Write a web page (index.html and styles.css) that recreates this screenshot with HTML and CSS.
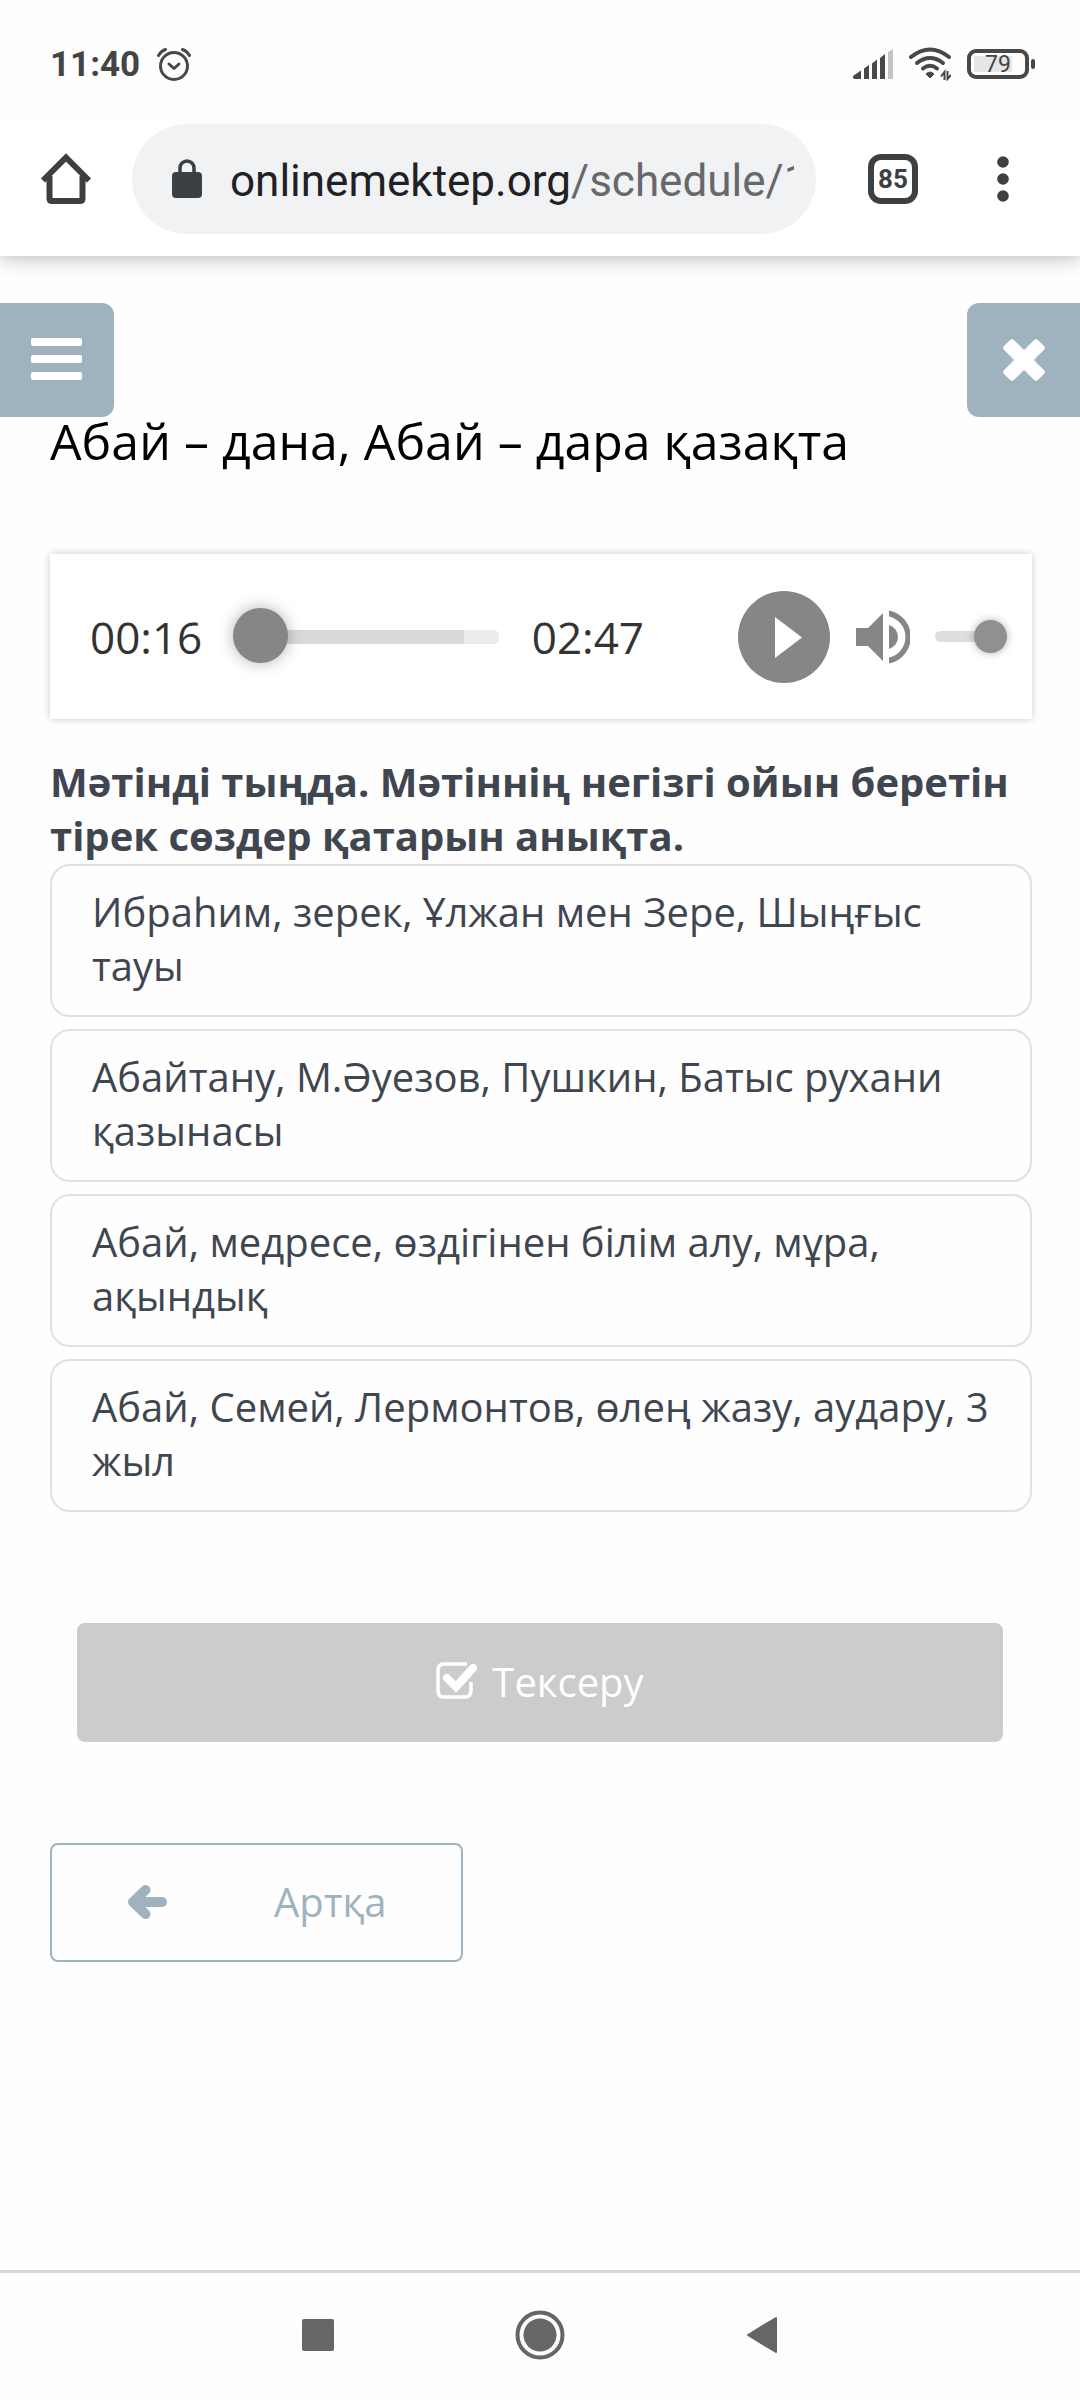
FILE: index.html
```html
<!DOCTYPE html>
<html lang="kk">
<head>
<meta charset="utf-8">
<meta name="viewport" content="width=device-width, initial-scale=1">
<title>Абай – дана, Абай – дара қазақта</title>
<link rel="stylesheet" href="styles.css">
</head>
<body>
<div class="status-bar">
  <div class="status-group">
    <span class="clock">11:40</span>
    <svg class="alarm" width="36" height="36" viewBox="0 0 36 36" fill="none" stroke="#484848" stroke-width="3" stroke-linecap="round" stroke-linejoin="round">
      <circle cx="18" cy="20" r="13.5"/>
      <path d="M13 18l5 4.500 5-4.500"/>
      <path d="M2.500 9.500Q5 5 9.500 3.500M33.500 9.500Q31 5 26.500 3.500"/>
    </svg>
  </div>
  <div class="status-group status-right">
    <svg width="40" height="30" viewBox="0 0 40 30">
      <g fill="#484848"><path d="M0 27l8-5.500V30H1.500Q0 30 0 28z"/><path d="M11 19.500l5-3.500V30h-5z"/><path d="M19 14.500l5-4V30h-5z"/><path d="M27 9l5-4V30h-5z"/></g>
      <path d="M35 3l5-3V30h-5z" fill="#c4c4c4"/>
    </svg>
    <svg width="42" height="34" viewBox="0 0 42 34">
      <g fill="none" stroke="#484848" stroke-width="4" stroke-linecap="round"><path d="M2 10Q21-5 40 10"/><path d="M8 16Q21 6 34 16"/><path d="M14 21.500Q21 16 28 21.500"/></g>
      <path d="M17 27Q21 23 25 27L21 31z" fill="#484848" stroke="#484848" stroke-linejoin="round"/>
      <path d="M35.500 33V25L32 29.500M38.500 24v8L42 28" fill="none" stroke="#484848" stroke-width="2"/>
    </svg>
    <span class="battery"><span class="battery-body">79</span><span class="battery-tip"></span></span>
  </div>
</div>
<header class="toolbar">
  <button class="icon-button" type="button" aria-label="Home">
    <svg width="52" height="52" viewBox="0 0 52 52" fill="none" stroke="#3c4043" stroke-width="6">
      <path d="M9.500 23v22.500q0 2.500 2.500 2.500h28q2.500 0 2.500-2.500V23"/>
      <path d="M3 27.500L26 4.500l23 23"/>
    </svg>
  </button>
  <button class="address" type="button">
    <svg class="lock" width="30" height="40" viewBox="0 0 30 40">
      <rect x="0" y="13" width="30" height="26" rx="4" fill="#3c4043"/>
      <path d="M8 15V9a7 7 0 0 1 14 0v6" fill="none" stroke="#3c4043" stroke-width="3.500"/>
    </svg>
    <span class="url">onlinemektep.org<span class="url-path">/schedule/1</span></span>
  </button>
  <button class="tabs" type="button" aria-label="Tabs">85</button>
  <button class="icon-button more" type="button" aria-label="More">
    <svg width="12" height="46" viewBox="0 0 12 46" fill="#3c4043"><circle cx="6" cy="6" r="5.800"/><circle cx="6" cy="23" r="5.800"/><circle cx="6" cy="40" r="5.800"/></svg>
  </button>
</header>
<main class="page">
  <div class="page-actions">
    <button class="square menu" type="button" aria-label="Мәзір">
      <svg width="52" height="44" viewBox="0 0 52 44" fill="#fff"><rect y="0" width="51" height="8" rx="2"/><rect y="17" width="51" height="8" rx="2"/><rect y="34" width="51" height="8" rx="2"/></svg>
    </button>
    <button class="square close" type="button" aria-label="Жабу">
      <svg width="42" height="42" viewBox="0 0 42 42" fill="#fff"><rect x="-3" y="14" width="48" height="14" rx="3" transform="rotate(45 21 21)"/><rect x="-3" y="14" width="48" height="14" rx="3" transform="rotate(-45 21 21)"/></svg>
    </button>
  </div>
  <div class="content">
    <h1 class="title">Абай – дана, Абай – дара қазақта</h1>
    <section class="player" aria-label="Аудио">
      <span class="time">00:16</span>
      <input class="seek" type="range" min="0" max="167" value="16" aria-label="Уақыт">
      <span class="time">02:47</span>
      <button class="play" type="button" aria-label="Ойнату">
        <svg width="92" height="92" viewBox="0 0 92 92"><circle cx="46" cy="46" r="46" fill="#868686"/><path d="M37 26v41l27-20.500z" fill="#fff"/></svg>
      </button>
      <button class="mute" type="button" aria-label="Дыбыс">
        <svg width="54" height="54" viewBox="0 0 54 54" fill="#868686"><path d="M0 18h12L27 3v48L12 36H0z"/><path d="M33 15a12.500 12.500 0 0 1 0 24z"/><path d="M33 0.500a27 27 0 0 1 0 53v-6a21 21 0 0 0 0-41z"/></svg>
      </button>
      <input class="volume" type="range" min="0" max="100" value="100" aria-label="Дыбыс деңгейі">
    </section>
    <form>
      <fieldset class="question">
        <legend class="prompt">Мәтінді тыңда. Мәтіннің негізгі ойын беретін тірек сөздер қатарын анықта.</legend>
        <div class="options">
          <label class="option"><input type="radio" name="answer" value="1"><span>Ибраһим, зерек, Ұлжан мен Зере, Шыңғыс тауы</span></label>
          <label class="option"><input type="radio" name="answer" value="2"><span>Абайтану, М.Әуезов, Пушкин, Батыс рухани қазынасы</span></label>
          <label class="option"><input type="radio" name="answer" value="3"><span>Абай, медресе, өздігінен білім алу, мұра, ақындық</span></label>
          <label class="option"><input type="radio" name="answer" value="4"><span>Абай, Семей, Лермонтов, өлең жазу, аудару, 3 жыл</span></label>
        </div>
      </fieldset>
      <button class="check" type="button">
        <svg width="42" height="38" viewBox="0 0 42 38"><path d="M31 3H8Q2 3 2 9v20q0 7 6 7h21q6 0 6-7v-8" fill="none" stroke="#fff" stroke-width="3.500"/><path d="M11 17l9 9L37 7" fill="none" stroke="#fff" stroke-width="8" stroke-linecap="round"/></svg>
        <span>Тексеру</span>
      </button>
    </form>
    <button class="back" type="button">
      <svg width="40" height="34" viewBox="0 0 40 34" fill="none" stroke="#9fb3bf" stroke-width="10" stroke-linecap="round" stroke-linejoin="round"><path d="M18.500 5L6 17l12.500 12"/><path d="M9 17h26"/></svg>
      <span>Артқа</span>
    </button>
  </div>
</main>
<nav class="system-nav">
  <button type="button" aria-label="Recent"><svg width="32" height="32" viewBox="0 0 32 32"><rect width="32" height="32" rx="2" fill="#666"/></svg></button>
  <button type="button" aria-label="Home screen"><svg width="50" height="50" viewBox="0 0 50 50"><circle cx="25" cy="25" r="22.500" fill="none" stroke="#666" stroke-width="4"/><circle cx="25" cy="25" r="16.500" fill="#666"/></svg></button>
  <button type="button" aria-label="Back"><svg width="32" height="38" viewBox="0 0 32 38"><path d="M30 2v34L2 19z" fill="#666" stroke="#666" stroke-width="2" stroke-linejoin="round"/></svg></button>
</nav>
</body>
</html>
```
FILE: styles.css
```css
* {
  box-sizing: border-box;
}

body {
  margin: 0;
  min-height: 100vh;
  display: flex;
  flex-direction: column;
  background: #fefefe;
  font-family: "Open Sans", "Noto Sans", sans-serif;
  font-size: 40px;
  line-height: 54px;
  color: #40464f;
}

button {
  margin: 0;
  padding: 0;
  border: 0;
  background: none;
  font: inherit;
  color: inherit;
}

svg {
  display: block;
  flex: none;
}

/* Phone status bar */
.status-bar {
  display: flex;
  justify-content: space-between;
  padding: 46px 45px 0 50px;
  height: 124px;
  font-family: Roboto, sans-serif;
  color: #444;
}

.status-group {
  display: flex;
  align-items: center;
  gap: 16px;
  height: 36px;
}

.clock {
  padding-top: 2px;
  font-size: 35px;
  font-weight: 700;
  line-height: 36px;
}

.battery {
  display: flex;
  align-items: center;
  gap: 2px;
}

.battery-body {
  width: 62px;
  height: 30px;
  border: 4px solid #484848;
  border-radius: 9px;
  background: linear-gradient(to right, #e6e6e6 38px, transparent 38px) 3px 3px / 38px 16px no-repeat;
  font-size: 23px;
  line-height: 24px;
  text-align: center;
}

.battery-tip {
  width: 4px;
  height: 10px;
  border-radius: 2px;
  background: #484848;
}

/* Browser toolbar */
.toolbar {
  display: flex;
  align-items: center;
  height: 132px;
  padding: 0 71px 22px 40px;
  background: #fff;
  box-shadow: 0 2px 18px rgba(0, 0, 0, 0.28);
  clip-path: inset(0 0 -30px);
  font-family: Roboto, sans-serif;
}

.address {
  flex: 1;
  min-width: 0;
  display: flex;
  align-items: center;
  gap: 28px;
  height: 110px;
  margin: 0 52px 0 40px;
  padding: 0 22px 0 40px;
  border-radius: 55px;
  background: #f1f2f4;
}

.url {
  flex: 1;
  min-width: 0;
  padding-top: 3px;
  overflow: hidden;
  white-space: nowrap;
  text-align: left;
  font-size: 44px;
  color: #202124;
}

.url-path {
  color: #66686b;
}

.tabs {
  width: 50px;
  height: 50px;
  border: 6px solid #3c4043;
  border-radius: 13px;
  font-size: 26px;
  font-weight: 700;
  line-height: 38px;
  color: #3c4043;
}

.more {
  margin-left: 79px;
}

/* Lesson page */
.page {
  flex: 1;
  padding-top: 47px;
}

.page-actions {
  display: flex;
  justify-content: space-between;
}

.square {
  display: flex;
  align-items: center;
  height: 114px;
  background: #9fb3bf;
}

.menu {
  padding: 0 31px;
  border-radius: 0 12px 12px 0;
}

.close {
  padding: 0 35px 0 36px;
  border-radius: 12px 0 0 12px;
}

.content {
  padding: 0 48px 48px 50px;
}

.title {
  margin: 0 0 89px;
  font-size: 50px;
  font-weight: 400;
  line-height: 48px;
  color: #000;
}

.player {
  display: flex;
  align-items: center;
  height: 165px;
  margin-bottom: 36px;
  padding: 0 25px 0 40px;
  background: #fff;
  box-shadow: 0 0 8px rgba(0, 0, 0, 0.2);
  color: #333;
}

.time {
  font-size: 44px;
}

input[type="range"] {
  -webkit-appearance: none;
  appearance: none;
  margin: 0;
  background: none;
}

.player .seek {
  flex: 1;
  min-width: 0;
  height: 56px;
  margin: 0 33px 0 9px;
}

.seek + .time {
  margin-right: 94px;
}

.seek::-webkit-slider-runnable-track {
  height: 14px;
  border-radius: 5px;
  background: linear-gradient(to right, transparent 48px, #dadada 48px, #dadada 88%, #ececec 88%);
}

.seek::-webkit-slider-thumb {
  -webkit-appearance: none;
  width: 55px;
  height: 55px;
  margin-top: -22px;
  border-radius: 50%;
  background: #868686;
  box-shadow: 0 0 16px rgba(0, 0, 0, 0.3);
}

.mute {
  margin: 0 25px 0 26px;
}

.volume {
  width: 72px;
  height: 34px;
}

.volume::-webkit-slider-runnable-track {
  height: 11px;
  border-radius: 6px;
  background: #dedede;
}

.volume::-webkit-slider-thumb {
  -webkit-appearance: none;
  width: 33px;
  height: 33px;
  margin-top: -11px;
  border-radius: 50%;
  background: #909090;
  box-shadow: 0 0 8px rgba(0, 0, 0, 0.3);
}

.question {
  min-width: 0;
  margin: 0;
  padding: 0;
  border: 0;
}

.prompt {
  padding: 0 0 1px;
  font-weight: 700;
}

.options {
  display: flex;
  flex-direction: column;
  gap: 12px;
}

.option {
  display: flex;
  padding: 19px 32px 22px 40px;
  border: 2px solid #e1e1e1;
  border-radius: 20px;
}

.option input {
  appearance: none;
  width: 0;
  height: 0;
  margin: 0;
}

.option:focus-within,
.option:has(:checked) {
  border-color: #9fb3bf;
}

.check {
  display: flex;
  align-items: center;
  justify-content: center;
  gap: 14px;
  width: calc(100% - 56px);
  height: 119px;
  margin: 111px auto 101px 27px;
  padding-bottom: 2px;
  border-radius: 8px;
  background: #ccc;
  color: #fff;
}

.check svg {
  margin-bottom: 4px;
}

.back {
  display: flex;
  align-items: center;
  gap: 107px;
  height: 119px;
  padding: 0 74px 2px 75px;
  border: 2px solid #9fb3bf;
  border-radius: 8px;
  color: #9fb3bf;
}

/* System navigation */
.system-nav {
  display: flex;
  align-items: center;
  justify-content: center;
  gap: 181px;
  height: 130px;
  padding-bottom: 4px;
  border-top: 3px solid #d6d6d6;
}
```
